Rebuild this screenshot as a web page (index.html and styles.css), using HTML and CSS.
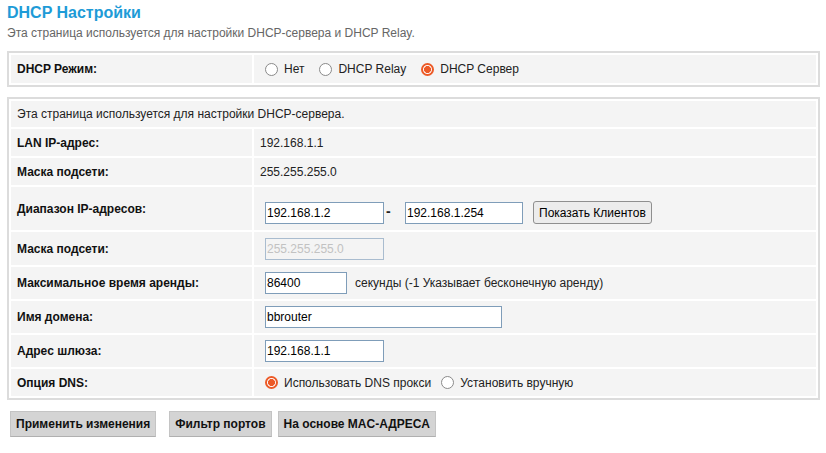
FILE: index.html
```html
<!DOCTYPE html>
<html lang="ru">
<head>
<meta charset="utf-8">
<title>DHCP Настройки</title>
<link rel="stylesheet" href="styles.css">
</head>
<body>
<div class="page">
  <h1 class="title">DHCP Настройки</h1>
  <p class="intro">Эта страница используется для настройки DHCP-сервера и DHCP Relay.</p>

  <div class="box box-mode">
    <table class="grid">
      <tr class="h28">
        <th>DHCP Режим:</th>
        <td>
          <div class="opts">
            <label class="opt"><input type="radio" name="mode" class="radio"><span>Нет</span></label>
            <label class="opt"><input type="radio" name="mode" class="radio"><span>DHCP Relay</span></label>
            <label class="opt"><input type="radio" name="mode" class="radio" checked><span>DHCP Сервер</span></label>
          </div>
        </td>
      </tr>
    </table>
  </div>

  <div class="box box-server">
    <table class="grid">
      <tr class="h26">
        <td colspan="2" class="info">Эта страница используется для настройки DHCP-сервера.</td>
      </tr>
      <tr class="h27">
        <th>LAN IP-адрес:</th>
        <td>192.168.1.1</td>
      </tr>
      <tr class="h27">
        <th>Маска подсети:</th>
        <td>255.255.255.0</td>
      </tr>
      <tr class="h43">
        <th>Диапазон IP-адресов:</th>
        <td class="range-cell">
          <div class="range">
            <input type="text" class="field w119" value="192.168.1.2">
            <span class="dash">-</span>
            <input type="text" class="field field-second w118" value="192.168.1.254">
            <button type="button" class="sys-btn">Показать Клиентов</button>
          </div>
        </td>
      </tr>
      <tr class="h33">
        <th>Маска подсети:</th>
        <td><input type="text" class="field w119" value="255.255.255.0" disabled></td>
      </tr>
      <tr class="h32">
        <th>Максимальное время аренды:</th>
        <td>
          <div class="lease">
            <input type="text" class="field w82" value="86400">
            <span class="note">секунды (-1 Указывает бесконечную аренду)</span>
          </div>
        </td>
      </tr>
      <tr class="h32">
        <th>Имя домена:</th>
        <td><input type="text" class="field w237" value="bbrouter"></td>
      </tr>
      <tr class="h32">
        <th>Адрес шлюза:</th>
        <td><input type="text" class="field w119" value="192.168.1.1"></td>
      </tr>
      <tr class="h27">
        <th>Опция DNS:</th>
        <td>
          <div class="opts">
            <label class="opt opt-wide"><input type="radio" name="dns" class="radio" checked><span>Использовать DNS прокси</span></label>
            <label class="opt"><input type="radio" name="dns" class="radio"><span>Установить вручную</span></label>
          </div>
        </td>
      </tr>
    </table>
  </div>

  <div class="actions">
    <button type="button" class="btn">Применить изменения</button>
    <button type="button" class="btn btn-2">Фильтр портов</button>
    <button type="button" class="btn btn-3">На основе MAC-АДРЕСА</button>
  </div>
</div>
</body>
</html>
```

FILE: styles.css
```css
html, body {
  margin: 0;
  padding: 0;
  background: #ffffff;
}

body {
  font-family: "Liberation Sans", Arial, sans-serif;
  font-size: 12px;
  color: #000;
}

.page {
  padding: 0 6px 0 7px;
}

.title {
  margin: 3px 0 0 0;
  font-size: 16px;
  line-height: 20px;
  font-weight: bold;
  color: #1e9bd7;
}

.intro {
  margin: 2px 0 0 0;
  font-size: 12px;
  line-height: 16px;
  color: #666;
}

.box {
  width: 813px;
  box-sizing: border-box;
  border: 2px solid #dcdcdc;
  margin-top: 10px;
}

.grid {
  width: 100%;
  border-collapse: separate;
  border-spacing: 2px;
}

.grid th,
.grid td {
  background: #f4f4f4;
  padding: 0 6px;
  vertical-align: middle;
  font-size: 12px;
  line-height: 14px;
}

.grid th {
  width: 229px;
  text-align: left;
  font-weight: bold;
  color: #111;
}

.grid td {
  color: #222;
}

.h26 { height: 26px; }
.h27 { height: 27px; }
.h28 { height: 28px; }
.h32 { height: 32px; }
.h33 { height: 33px; }
.h43 { height: 43px; }

.grid td.range-cell {
  vertical-align: top;
  padding-top: 14px;
}

.opts {
  display: flex;
  align-items: center;
}

.opt {
  display: inline-flex;
  align-items: center;
  margin-right: 10px;
}

.opt-wide {
  margin-right: 5px;
}

.radio {
  -webkit-appearance: none;
  appearance: none;
  width: 13px;
  height: 13px;
  margin: 0 6px 0 5px;
  border: 1px solid #8a8a8a;
  border-radius: 50%;
  background: #fff;
  box-sizing: border-box;
}

.radio:checked {
  border: 2px solid #ec5a27;
  background: radial-gradient(circle, #ec5a27 0, #ec5a27 3.2px, #fff 3.8px);
}

.field {
  box-sizing: border-box;
  height: 22px;
  margin: 0 0 0 5px;
  padding: 0 1px;
  border: 1px solid #7f9db9;
  background: #fff;
  font-family: "Liberation Sans", Arial, sans-serif;
  font-size: 12px;
  color: #000;
  vertical-align: middle;
  outline: none;
}

.field:disabled {
  background: #f4f4f4;
  border-color: #a9bccf;
  color: #c2c2c2;
}

.w82 { width: 82px; }
.w118 { width: 118px; }
.w119 { width: 119px; }
.w237 { width: 237px; }

.range {
  display: flex;
  align-items: center;
}

.dash {
  display: inline-block;
  width: 21px;
  padding-left: 2px;
  box-sizing: border-box;
  font-weight: bold;
  font-size: 14px;
  line-height: 14px;
  margin-top: -4px;
}

.field-second {
  margin-left: 0;
}

.sys-btn {
  box-sizing: border-box;
  height: 23px;
  margin-left: 10px;
  padding: 0 5px;
  border: 1px solid #8f8f8f;
  border-radius: 3px;
  background: #ececec;
  font-family: "Liberation Sans", Arial, sans-serif;
  font-size: 12px;
  color: #000;
}

.lease {
  display: flex;
  align-items: center;
}

.note {
  margin-left: 8px;
}

.actions {
  display: flex;
  margin-top: 11px;
  padding-left: 3px;
}

.btn {
  box-sizing: border-box;
  height: 26px;
  padding: 0 5px;
  border: 1px solid #c4c4c4;
  border-bottom-color: #b0b0b0;
  background: #d4d4d4;
  font-family: "Liberation Sans", Arial, sans-serif;
  font-size: 12px;
  font-weight: bold;
  color: #111;
}

.btn-2 { margin-left: 13px; }
.btn-3 { margin-left: 6px; }
```
